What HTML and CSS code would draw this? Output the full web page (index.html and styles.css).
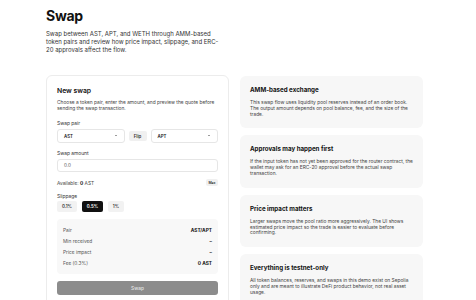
FILE: index.html
```html
<!DOCTYPE html>
<html lang="en">
<head>
<meta charset="utf-8">
<title>Swap</title>
<link rel="stylesheet" href="styles.css">
</head>
<body>
<main class="page">
  <header class="header">
    <h1 class="title">Swap</h1>
    <p class="lead">Swap between AST, APT, and WETH through AMM-based token pairs and review how price impact, slippage, and ERC-20 approvals affect the flow.</p>
  </header>
  <div class="grid">
    <section class="card">
      <h2 class="card-title">New swap</h2>
      <p class="card-desc">Choose a token pair, enter the amount, and preview the quote before sending the swap transaction.</p>

      <div class="label label-first">Swap pair</div>
      <div class="pair">
        <div class="select"><span>AST</span><svg class="chev" viewBox="0 0 4 3" width="2" height="1.5"><path d="M0.5 0.5 L2 2 L3.5 0.5" fill="none" stroke="#222" stroke-width="1.2"/></svg></div>
        <button class="flip">Flip</button>
        <div class="select"><span>APT</span><svg class="chev" viewBox="0 0 4 3" width="2" height="1.5"><path d="M0.5 0.5 L2 2 L3.5 0.5" fill="none" stroke="#222" stroke-width="1.2"/></svg></div>
      </div>

      <div class="label">Swap amount</div>
      <div class="input">0.0</div>

      <div class="avail">
        <span>Available: <b>0</b> AST</span>
        <button class="max">Max</button>
      </div>

      <div class="label">Slippage</div>
      <div class="slip">
        <button class="chip">0.1%</button>
        <button class="chip chip-on">0.5%</button>
        <button class="chip">1%</button>
      </div>

      <div class="summary">
        <div class="row"><span>Pair</span><b>AST/APT</b></div>
        <div class="row"><span>Min received</span><b>–</b></div>
        <div class="row"><span>Price impact</span><b>–</b></div>
        <div class="row"><span>Fee (0.3%)</span><b>0 AST</b></div>
      </div>

      <button class="swap">Swap</button>
    </section>

    <aside class="side">
      <div class="info">
        <h3 class="info-title">AMM-based exchange</h3>
        <p class="info-text">This swap flow uses liquidity pool reserves instead of an order book. The output amount depends on pool balance, fee, and the size of the trade.</p>
      </div>
      <div class="info">
        <h3 class="info-title">Approvals may happen first</h3>
        <p class="info-text">If the input token has not yet been approved for the router contract, the wallet may ask for an ERC-20 approval before the actual swap transaction.</p>
      </div>
      <div class="info">
        <h3 class="info-title">Price impact matters</h3>
        <p class="info-text">Larger swaps move the pool ratio more aggressively. The UI shows estimated price impact so the trade is easier to evaluate before confirming.</p>
      </div>
      <div class="info">
        <h3 class="info-title">Everything is testnet-only</h3>
        <p class="info-text">All token balances, reserves, and swaps in this demo exist on Sepolia only and are meant to illustrate DeFi product behavior, not real asset usage.</p>
      </div>
    </aside>
  </div>
</main>
</body>
</html>
```

FILE: styles.css
```css
* { box-sizing: border-box; }
html, body { margin: 0; padding: 0; background: #fff; }
body {
  font-family: "Inter", "Liberation Sans", sans-serif;
  color: #111;
}
.page {
  width: 377px;
  margin-left: 46px;
  padding-top: 7px;
}
.title {
  margin: 0;
  font-size: 14px;
  line-height: 17px;
  font-weight: 700;
  letter-spacing: -0.02em;
}
.lead {
  margin: 6px 0 0;
  width: 176px;
  font-size: 6px;
  line-height: 8px;
  color: #333;
}
.grid {
  margin-top: 21px;
  display: grid;
  grid-template-columns: 183px 183px;
  column-gap: 11px;
  align-items: start;
}
.card {
  border: 1px solid #ececec;
  border-radius: 6px;
  padding: 10px 10px 10px;
  background: #fff;
  height: 240px;
}
.card-title {
  margin: 0;
  font-size: 6.8px;
  line-height: 9px;
  font-weight: 600;
}
.card-desc {
  margin: 5px 0 0;
  font-size: 4.85px;
  line-height: 5.8px;
  color: #444;
}
.label {
  margin-top: 7px;
  font-size: 4.9px;
  line-height: 6px;
  color: #333;
}
.label-first { margin-top: 8px; }
.pair {
  margin-top: 3.5px;
  display: flex;
  gap: 4px;
  align-items: center;
}
.select {
  flex: 1;
  height: 14px;
  border: 1px solid #e6e6e6;
  border-radius: 3px;
  display: flex;
  align-items: center;
  justify-content: space-between;
  padding: 0 7px 0 6px;
  font-size: 4.4px;
  font-weight: 600;
  color: #222;
}
.chev { display: block; }
button {
  font-family: inherit;
  border: none;
  margin: 0;
  cursor: pointer;
}
.flip {
  width: 18px;
  height: 10px;
  border-radius: 2px;
  background: #f0f0f0;
  font-size: 4.4px;
  font-weight: 600;
  color: #333;
  padding: 0;
}
.input {
  margin-top: 3px;
  height: 13px;
  border: 1px solid #e6e6e6;
  border-radius: 3px;
  display: flex;
  align-items: center;
  padding: 0 6px;
  font-size: 4.6px;
  color: #555;
}
.avail {
  margin-top: 7px;
  height: 7px;
  display: flex;
  align-items: center;
  justify-content: space-between;
  font-size: 4.8px;
  color: #444;
}
.avail b { color: #111; font-weight: 700; }
.max {
  width: 12px;
  height: 7px;
  border-radius: 2px;
  background: #f0f0f0;
  font-size: 3.5px;
  font-weight: 600;
  color: #333;
  padding: 0;
}
.slip {
  margin-top: 2px;
  display: flex;
  gap: 5px;
}
.chip {
  height: 11px;
  padding: 0;
  border-radius: 2px;
  background: #f2f2f2;
  font-size: 4.4px;
  font-weight: 600;
  color: #333;
}
.chip:nth-child(1) { width: 20px; }
.chip:nth-child(2) { width: 21px; }
.chip:nth-child(3) { width: 16px; }
.chip-on {
  background: #111;
  color: #fff;
}
.summary {
  margin-top: 7px;
  background: #f8f8f8;
  border-radius: 4px;
  padding: 5px 6px 6px;
  display: flex;
  flex-direction: column;
}
.row {
  height: 11px;
  display: flex;
  align-items: center;
  justify-content: space-between;
  font-size: 4.8px;
  color: #555;
}
.row b { color: #111; font-weight: 700; }
.swap {
  margin-top: 7px;
  width: 100%;
  height: 14px;
  border-radius: 3px;
  background: #8c8c8c;
  color: #e4e4e4;
  font-size: 4.8px;
  font-weight: 500;
}
.side {
  display: flex;
  flex-direction: column;
  gap: 7px;
  margin-top: 1px;
}
.info {
  background: #f7f7f7;
  border-radius: 6px;
  padding: 10px 10px 11px;
}
.info-title {
  margin: 0;
  font-size: 6.2px;
  line-height: 8px;
  font-weight: 700;
}
.info-text {
  margin: 6px 0 0;
  font-size: 4.85px;
  line-height: 5.8px;
  color: #444;
}
```
